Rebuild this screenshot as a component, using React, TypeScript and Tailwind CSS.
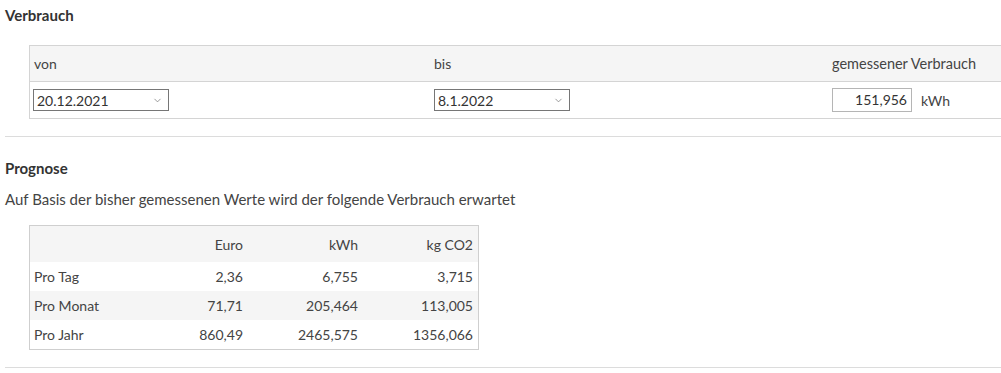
import { ChevronDown } from 'lucide-react'

const DateSelect = ({ value }: { value: string }) => (
    <div className='w-[136px] h-[22px] border border-[#767676] bg-white flex items-center justify-between pl-[3px] pr-[5px]'>
        <span className='text-[14px] text-[#333]'>{value}</span>
        <ChevronDown size={11} strokeWidth={1.6} className='text-[#777]' />
    </div>
)

const rows = [
    { label: 'Pro Tag', euro: '2,36', kwh: '6,755', co2: '3,715', bg: 'bg-white' },
    { label: 'Pro Monat', euro: '71,71', kwh: '205,464', co2: '113,005', bg: 'bg-[#f5f5f5]' },
    { label: 'Pro Jahr', euro: '860,49', kwh: '2465,575', co2: '1356,066', bg: 'bg-white' },
]

function App() {
    return (
        <div className="min-h-[373px] bg-white pl-[5px] font-['Lato',sans-serif] text-[14px] text-[#333]">
            {/* Verbrauch */}
            <h3 className='pt-[5px] leading-[20px] text-[15px] font-bold'>Verbrauch</h3>
            <div className='ml-[24px] mt-[20px] border border-r-0 border-[#d4d4d4]'>
                <div className='flex h-[36px] items-center bg-[#f5f5f5] border-b border-[#d4d4d4] text-[#444]'>
                    <div className='w-[400px] pl-[4px]'>von</div>
                    <div className='w-[399px] pl-[4px]'>bis</div>
                    <div className='flex-1 pl-[3px] text-[14.5px]'>gemessener Verbrauch</div>
                </div>
                <div className='flex h-[36px] items-center'>
                    <div className='w-[400px] pl-[3px]'>
                        <DateSelect value='20.12.2021' />
                    </div>
                    <div className='w-[399px] pl-[4px]'>
                        <DateSelect value='8.1.2022' />
                    </div>
                    <div className='flex-1 flex items-center pl-[3px]'>
                        <div className='w-[80px] h-[24px] border border-[#b5b5b5] text-right pr-[4px] leading-[22px]'>151,956</div>
                        <span className='ml-[9px] text-[#444]'>kWh</span>
                    </div>
                </div>
            </div>
            <div className='mt-[17px] border-t border-[#dcdcdc]'></div>

            {/* Prognose */}
            <h3 className='mt-[21px] leading-[20px] text-[15px] font-bold'>Prognose</h3>
            <p className='mt-[11px] leading-[20px] text-[15px] text-[#444]'>Auf Basis der bisher gemessenen Werte wird der folgende Verbrauch erwartet</p>
            <div className='ml-[24px] mt-[16px] w-[450px] border border-[#cfcfcf] text-[#444]'>
                <div className='grid grid-cols-[103px_115px_115px_115px] h-[36px] items-center bg-[#f5f5f5]'>
                    <div></div>
                    <div className='text-right pr-[5px]'>Euro</div>
                    <div className='text-right pr-[5px]'>kWh</div>
                    <div className='text-right pr-[5px]'>kg CO2</div>
                </div>
                {rows.map((r) => (
                    <div key={r.label} className={`grid grid-cols-[103px_115px_115px_115px] h-[29px] items-center ${r.bg}`}>
                        <div className='pl-[4px]'>{r.label}</div>
                        <div className='text-right pr-[5px]'>{r.euro}</div>
                        <div className='text-right pr-[5px]'>{r.kwh}</div>
                        <div className='text-right pr-[5px]'>{r.co2}</div>
                    </div>
                ))}
            </div>
            <div className='mt-[17px] border-t border-[#dcdcdc]'></div>
        </div>
    )
}

export default App
